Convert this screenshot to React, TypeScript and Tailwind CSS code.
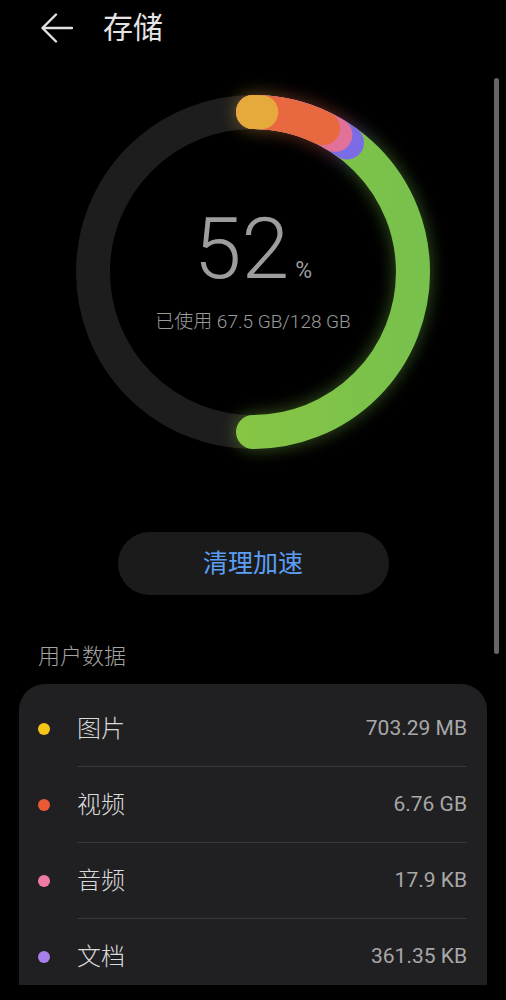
import React from 'react';

const font = { fontFamily: 'Roboto, "Noto Sans CJK SC", sans-serif' };

// arcs are drawn longest first so the shorter ones sit on top with their round caps
const arcs = [
  { end: 180, color: 'url(#ringGreen)' },
  { end: 36, color: '#7b6ce6' },
  { end: 31, color: '#e27199' },
  { end: 26, color: '#e8693f' },
  { end: 3, color: '#e6aa3c' },
];

const items = [
  { name: '图片', size: '703.29 MB', dot: 'bg-[#f5c518]' },
  { name: '视频', size: '6.76 GB', dot: 'bg-[#ea5b35]' },
  { name: '音频', size: '17.9 KB', dot: 'bg-[#f07aa7]' },
  { name: '文档', size: '361.35 KB', dot: 'bg-[#a97fe9]' },
];

const StorageRing: React.FC = () => (
  <svg width="400" height="400" viewBox="0 0 400 400">
    <defs>
      <linearGradient id="ringGreen" x1="0" y1="0" x2="0" y2="1">
        <stop offset="0%" stopColor="#93c93e" />
        <stop offset="100%" stopColor="#78c14c" />
      </linearGradient>
      <filter id="ringGlow" x="-20%" y="-20%" width="140%" height="140%">
        <feGaussianBlur stdDeviation="9" />
      </filter>
    </defs>
    <circle cx="200" cy="200" r="160" fill="none" stroke="#1d1d1d" strokeWidth="34" />
    <g transform="rotate(-90 200 200)">
      <g filter="url(#ringGlow)" opacity="0.45">
        {arcs.map((a, i) => (
          <circle
            key={`g${i}`}
            cx="200"
            cy="200"
            r="160"
            fill="none"
            stroke={a.color}
            strokeWidth="34"
            strokeLinecap="round"
            pathLength={360}
            strokeDasharray={`${a.end} 360`}
          />
        ))}
      </g>
      {arcs.map((a, i) => (
        <circle
          key={i}
          cx="200"
          cy="200"
          r="160"
          fill="none"
          stroke={a.color}
          strokeWidth="34"
          strokeLinecap="round"
          pathLength={360}
          strokeDasharray={`${a.end} 360`}
        />
      ))}
    </g>
  </svg>
);

export default function App() {
  return (
    <div className="relative h-[1000px] w-[506px] overflow-hidden bg-black" style={font}>
      <header className="flex h-14 items-center pl-[41px]">
        <svg width="32" height="30" viewBox="0 0 32 30" fill="none" stroke="#e2e2e2" strokeWidth="2.4" strokeLinecap="round" strokeLinejoin="round">
          <path d="M31 15H2" />
          <path d="M15 1.5 1.5 15 15 28.5" />
        </svg>
        <h1 className="ml-[30px] text-[30px] leading-none text-[#e4e4e4]">存储</h1>
      </header>

      <div className="relative mx-auto mt-4 h-[400px] w-[400px]">
        <StorageRing />
        <div className="absolute inset-0 flex flex-col items-center justify-center pb-[8px]">
          <div className="flex items-baseline text-[#9d9d9d]">
            <span className="text-[86px] font-light leading-none">52</span>
            <span className="ml-[6px] text-[23px]">%</span>
          </div>
          <p className="mt-[20px] text-[19px] font-light leading-none text-[#9a9a9a]">已使用 67.5 GB/128 GB</p>
        </div>
      </div>

      <button className="mx-auto mt-[60px] flex h-[63px] w-[271px] items-center justify-center rounded-full bg-[#1b1b1c] text-[25px] text-[#5b9ff5]">
        清理加速
      </button>

      <div className="mt-[48px] pl-[38px] text-[22px] font-light leading-[28px] text-[#a3a3a3]">用户数据</div>

      <div className="mx-[19px] mt-[13px] h-[301px] overflow-hidden rounded-t-[26px] bg-[#202022] pt-[7px]">
        {items.map(item => (
          <div key={item.name} className="flex h-[76px] items-center pl-[19px] pr-[20px]">
            <span className={`h-[12px] w-[12px] shrink-0 rounded-full ${item.dot}`} />
            <div className="ml-[27px] flex h-full flex-1 items-center justify-between border-b border-[#38383a]">
              <span className="text-[24px] font-light text-[#dadada]">{item.name}</span>
              <span className="text-[21px] text-[#a8a8a8]">{item.size}</span>
            </div>
          </div>
        ))}
      </div>

      <div className="absolute left-[494px] top-[78px] h-[576px] w-[5px] rounded-full bg-[#666666]" />
    </div>
  );
}
